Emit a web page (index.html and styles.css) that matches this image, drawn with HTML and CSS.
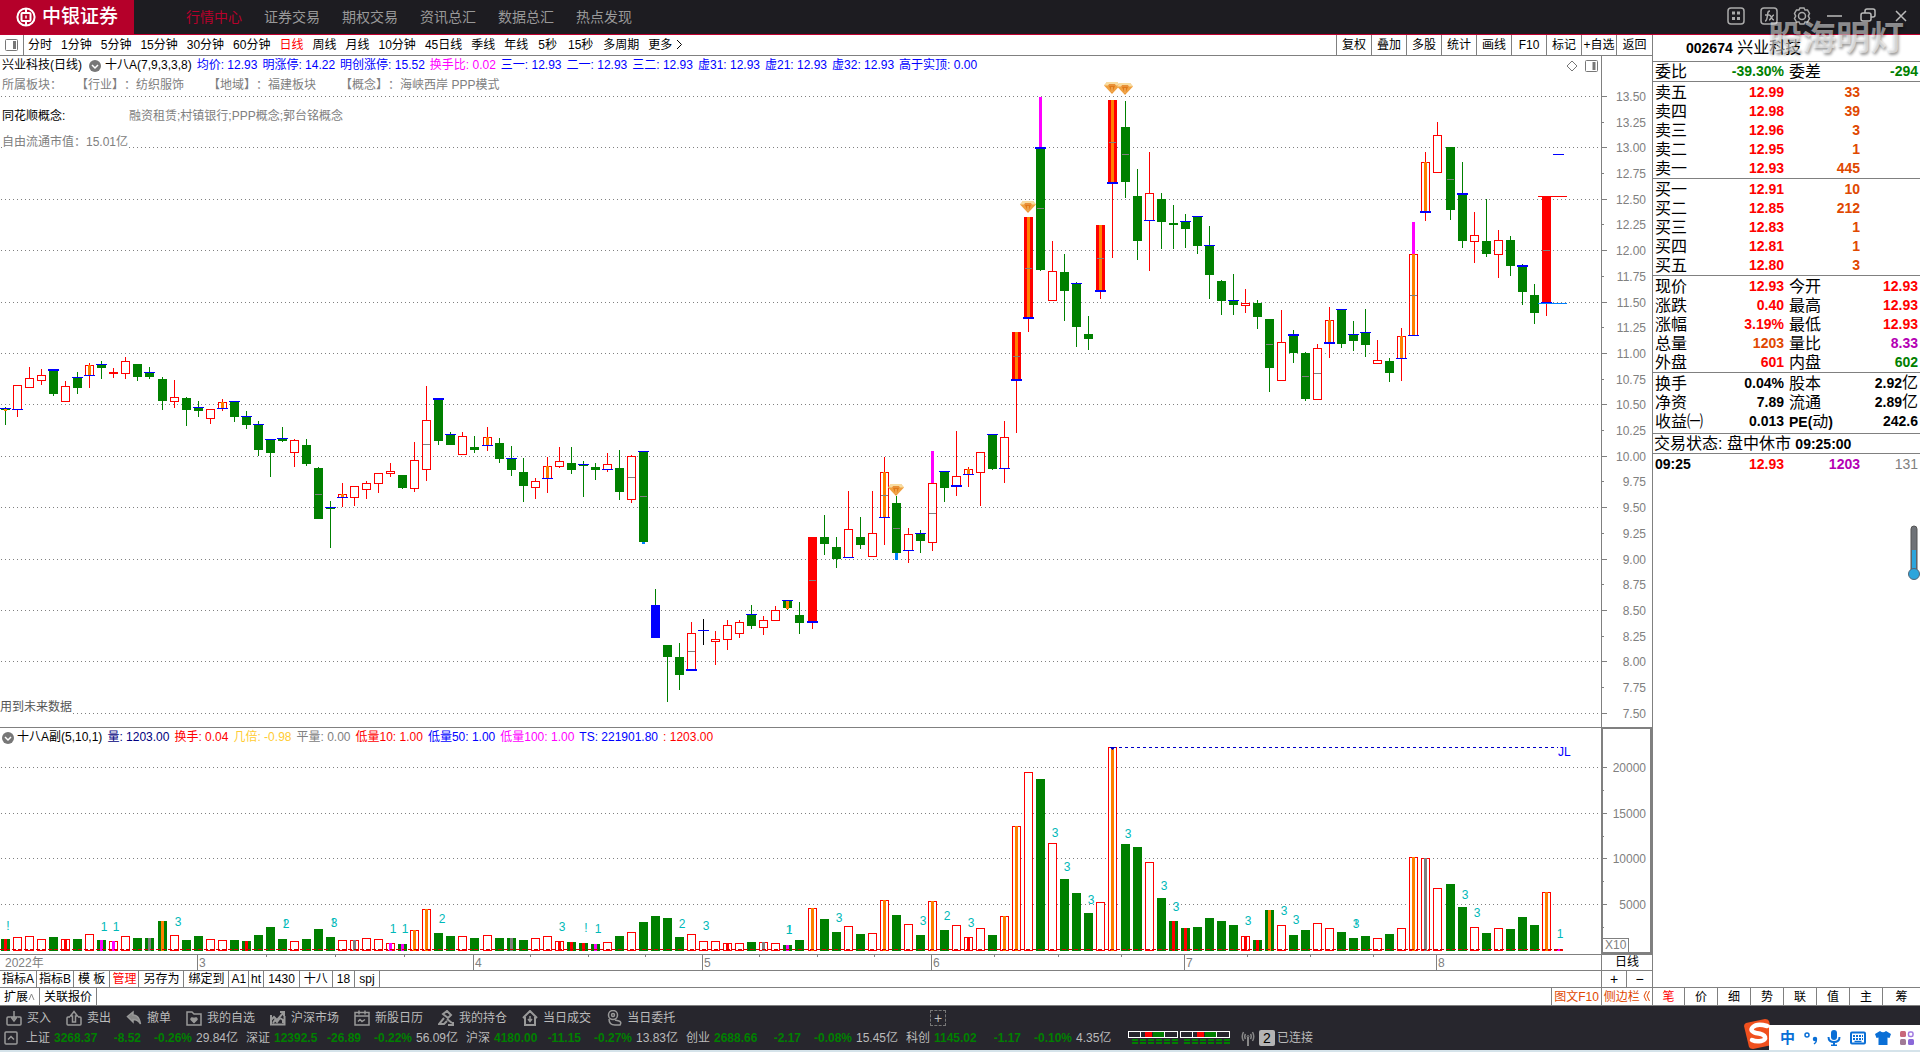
FILE: index.html
```html
<!DOCTYPE html>
<html lang="zh-CN">

<head>
    <meta charset="UTF-8">
    <meta name="viewport" content="width=device-width, initial-scale=1.0">
    <title>兴业科技 002674</title>
    <link rel="stylesheet" href="styles.css">
</head>

<body>
    <header class="titlebar">
        <div class="brand">
            <svg width="20" height="20" viewBox="0 0 20 20" fill="none" stroke="#fff">
                <circle cx="10" cy="10" r="8.6" stroke-width="2"/>
                <path d="M10 1v4.500M10 14.500V19" stroke-width="2"/>
                <rect x="5.500" y="6" width="9" height="8" rx="1" stroke-width="2"/>
                <path d="M10 8.500v3" stroke-width="1.500"/>
            </svg>
            <span>中银证券</span>
        </div>
        <nav class="main-nav">
            <a class="active" href="#">行情中心</a>
            <a href="#">证券交易</a>
            <a href="#">期权交易</a>
            <a href="#">资讯总汇</a>
            <a href="#">数据总汇</a>
            <a href="#">热点发现</a>
        </nav>
        <div class="window-tools">
            <button aria-label="应用"><svg width="18" height="18" viewBox="0 0 18 18" fill="none" stroke="#aaa" stroke-width="1.500"><rect x="1" y="1" width="16" height="16" rx="3"/><path d="M5 6h3M10 6h3M5 11.500h3M10 11.500h3" stroke-width="3"/></svg></button>
            <button aria-label="公式"><svg width="18" height="18" viewBox="0 0 18 18" fill="none" stroke="#aaa" stroke-width="1.500"><rect x="1" y="1" width="16" height="16" rx="3"/><path d="M10 4c-2 0-2 1-2.500 4s-.500 6-2.500 6M5 8h4M9 8c3 0 2 5 5 5M14 8c-2 0-3 5-5 5"/></svg></button>
            <button aria-label="设置"><svg width="18" height="18" viewBox="0 0 18 18" fill="none" stroke="#aaa" stroke-width="1.500"><circle cx="9" cy="9" r="3.500"/><path d="M7 1h4l1 2 2.500 0 2 3.500-1.200 2.500 1.200 2.500-2 3.500-2.500 0-1 2H7l-1-2-2.500 0-2-3.500L2.700 9 1.500 6.500l2-3.500L6 3z"/></svg></button>
            <button aria-label="最小化"><svg width="18" height="18" viewBox="0 0 18 18" fill="none" stroke="#bbb" stroke-width="1.500"><path d="M1 9h15"/></svg></button>
            <button aria-label="还原"><svg width="18" height="18" viewBox="0 0 18 18" fill="none" stroke="#bbb" stroke-width="1.500"><rect x="2" y="6" width="10" height="8" rx="2"/><path d="M6 6V4q0-2 2-2h6q2 0 2 2v4q0 2-2 2h-2"/></svg></button>
            <button aria-label="关闭"><svg width="18" height="18" viewBox="0 0 18 18" fill="none" stroke="#bbb" stroke-width="1.500"><path d="M4 4l10 10M14 4L4 14"/></svg></button>
        </div>
        <div class="watermark">股海明灯</div>
    </header>

    <main class="workspace">
        <section class="chart-area">
            <div class="toolbar">
                <button class="panel-toggle" aria-label="面板"><svg width="13" height="12" viewBox="0 0 13 12" fill="none" stroke="#777"><rect x=".500" y=".500" width="12" height="11" rx="1"/><path d="M9.500 2v8" stroke-width="3"/></svg></button>
                <div class="periods">
                    <button>分时</button>
                    <button>1分钟</button>
                    <button>5分钟</button>
                    <button>15分钟</button>
                    <button>30分钟</button>
                    <button>60分钟</button>
                    <button class="red">日线</button>
                    <button>周线</button>
                    <button>月线</button>
                    <button>10分钟</button>
                    <button>45日线</button>
                    <button>季线</button>
                    <button>年线</button>
                    <button class="sec">5秒</button>
                    <button class="sec">15秒</button>
                    <button>多周期</button>
                    <button>更多 <svg width="7" height="11" viewBox="0 0 7 11" fill="none" stroke="#000"><path d="M1 1l4.500 4.500L1 10"/></svg></button>
                </div>
                <div class="actions">
                    <button>复权</button>
                    <button>叠加</button>
                    <button>多股</button>
                    <button>统计</button>
                    <button>画线</button>
                    <button>F10</button>
                    <button>标记</button>
                    <button>+自选</button>
                    <button>返回</button>
                </div>
            </div>

            <div class="pane price-pane">
                <div class="plot">
                    <svg id="price-plot" viewBox="0 56 1601 671" preserveAspectRatio="none"></svg>
                    <div class="legend">
                        <div class="legend-row">
                            <span>兴业科技(日线)</span>
                            <svg class="round" width="12" height="12" viewBox="0 0 12 12"><circle cx="6" cy="6" r="6" fill="#777"/><path d="M3 5l3 3 3-3" fill="none" stroke="#fff" stroke-width="1.500"/></svg>
                            <span>十八A(7,9,3,3,8)</span>
                            <span class="blue">均价: 12.93</span>
                            <span class="blue">明涨停: 14.22</span>
                            <span class="blue">明创涨停: 15.52</span>
                            <span class="magenta">换手比: 0.02</span>
                            <span class="blue">三一: 12.93</span>
                            <span class="blue">二一: 12.93</span>
                            <span class="blue">三二: 12.93</span>
                            <span class="blue">虚31: 12.93</span>
                            <span class="blue">虚21: 12.93</span>
                            <span class="blue">虚32: 12.93</span>
                            <span class="blue">高于实顶: 0.00</span>
                        </div>
                        <div class="legend-row sector gray">
                            <span class="sector-title">所属板块：</span>
                            <span>【行业】：纺织服饰</span>
                            <span>【地域】：福建板块</span>
                            <span>【概念】：海峡西岸 PPP模式</span>
                        </div>
                        <div class="legend-row concept">
                            <span class="concept-title">同花顺概念:</span>
                            <span class="gray">融资租赁;村镇银行;PPP概念;郭台铭概念</span>
                        </div>
                        <div class="legend-row float-cap gray">自由流通市值：15.01亿</div>
                    </div>
                    <div class="plot-tools">
                        <svg width="12" height="12" viewBox="0 0 12 12" fill="none" stroke="#777"><path d="M6 1l5 5-5 5-5-5z"/></svg>
                        <svg width="13" height="12" viewBox="0 0 13 12" fill="none" stroke="#777"><rect x=".500" y=".500" width="12" height="11" rx="1"/><path d="M9 2v8" stroke-width="3"/></svg>
                    </div>
                    <div class="future-note">用到未来数据</div>
                </div>
                <div class="scale">
                    <svg id="price-scale" viewBox="1601 56 51 671" preserveAspectRatio="none"></svg>
                </div>
            </div>

            <div class="pane volume-pane">
                <div class="plot">
                    <svg id="volume-plot" viewBox="0 728 1601 226" preserveAspectRatio="none"></svg>
                    <div class="legend">
                        <div class="legend-row">
                            <svg class="round" width="12" height="12" viewBox="0 0 12 12"><circle cx="6" cy="6" r="6" fill="#777"/><path d="M3 5l3 3 3-3" fill="none" stroke="#fff" stroke-width="1.500"/></svg>
                            <span>十八A副(5,10,1)</span>
                            <span class="navy">量: 1203.00</span>
                            <span class="red">换手: 0.04</span>
                            <span class="yellow">几倍: -0.98</span>
                            <span class="gray">平量: 0.00</span>
                            <span class="red">低量10: 1.00</span>
                            <span class="blue">低量50: 1.00</span>
                            <span class="magenta">低量100: 1.00</span>
                            <span class="blue">TS: 221901.80</span>
                            <span class="red">: 1203.00</span>
                        </div>
                    </div>
                </div>
                <div class="scale boxed">
                    <svg id="volume-scale" viewBox="1603 729 47 223" preserveAspectRatio="none"></svg>
                    <span class="multiplier">X10</span>
                </div>
            </div>

            <div class="strip time-strip">
                <svg id="time-axis" viewBox="0 955 1601 15" preserveAspectRatio="none"></svg>
                <div class="cell-period">日线</div>
            </div>
            <div class="strip template-strip">
                <button class="tight">指标A</button>
                <button class="tight">指标B</button>
                <button>模 板</button>
                <button class="tight red">管理</button>
                <button>另存为</button>
                <button>绑定到</button>
                <button class="tight">A1</button>
                <button class="tight">ht</button>
                <button>1430</button>
                <button>十八</button>
                <button>18</button>
                <button>spj</button>
                <div class="zoom-buttons">
                    <button>+</button>
                    <button>−</button>
                </div>
            </div>
            <div class="strip extend-strip">
                <button>扩展<svg width="7" height="8" viewBox="0 0 7 8" fill="none" stroke="#888"><path d="M1 7l2.500-6L6 7"/></svg></button>
                <button>关联报价</button>
                <div class="side-links">
                    <button>图文F10</button>
                    <button>侧边栏 <svg width="7" height="10" viewBox="0 0 7 10" fill="none" stroke="#e04800"><path d="M3.500 0L1 5l2.500 5M6.500 0L4 5l2.500 5"/></svg></button>
                </div>
            </div>
        </section>

        <aside class="quote">
            <h1 class="quote-title"><b>002674</b> 兴业科技</h1>
            <table class="pairs">
                <tr><th>委比</th><td class="green">-39.30%</td><th>委差</th><td class="green">-294</td></tr>
            </table>
            <table class="book">
                <tr><th>卖五</th><td>12.99</td><td>33</td><td></td></tr>
                <tr><th>卖四</th><td>12.98</td><td>39</td><td></td></tr>
                <tr><th>卖三</th><td>12.96</td><td>3</td><td></td></tr>
                <tr><th>卖二</th><td>12.95</td><td>1</td><td></td></tr>
                <tr><th>卖一</th><td>12.93</td><td>445</td><td></td></tr>
            </table>
            <table class="book">
                <tr><th>买一</th><td>12.91</td><td>10</td><td></td></tr>
                <tr><th>买二</th><td>12.85</td><td>212</td><td></td></tr>
                <tr><th>买三</th><td>12.83</td><td>1</td><td></td></tr>
                <tr><th>买四</th><td>12.81</td><td>1</td><td></td></tr>
                <tr><th>买五</th><td>12.80</td><td>3</td><td></td></tr>
            </table>
            <table class="pairs">
                <tr><th>现价</th><td class="red">12.93</td><th>今开</th><td class="red">12.93</td></tr>
                <tr><th>涨跌</th><td class="red">0.40</td><th>最高</th><td class="red">12.93</td></tr>
                <tr><th>涨幅</th><td class="red">3.19%</td><th>最低</th><td class="red">12.93</td></tr>
                <tr><th>总量</th><td class="orange">1203</td><th>量比</th><td class="purple">8.33</td></tr>
                <tr><th>外盘</th><td class="red">601</td><th>内盘</th><td class="green">602</td></tr>
            </table>
            <table class="pairs basics">
                <tr><th>换手</th><td>0.04%</td><th>股本</th><td>2.92<i>亿</i></td></tr>
                <tr><th>净资</th><td>7.89</td><th>流通</th><td>2.89<i>亿</i></td></tr>
                <tr><th>收益㈠</th><td>0.013</td><th><b>PE(</b>动<b>)</b></th><td>242.6</td></tr>
            </table>
            <p class="status">交易状态: 盘中休市 <b>09:25:00</b></p>
            <table class="book ticks">
                <tr><td class="time">09:25</td><td>12.93</td><td class="purple">1203</td><td class="count">131</td></tr>
            </table>
            <div class="thermo">
                <svg width="12" height="56" viewBox="0 0 12 56"><rect x="3" y="1" width="6" height="46" rx="3" fill="#6f7378" stroke="#555"/><rect x="4" y="25" width="4" height="24" fill="#2da5dc"/><circle cx="6" cy="49" r="5.500" fill="#2da5dc" stroke="#567"/></svg>
            </div>
            <div class="quote-tabs">
                <button class="red">笔</button>
                <button>价</button>
                <button>细</button>
                <button>势</button>
                <button>联</button>
                <button>值</button>
                <button>主</button>
                <button>筹</button>
            </div>
        </aside>
    </main>

    <footer class="dock">
        <div class="shortcuts">
            <a href="#"><svg viewBox="0 0 16 16"><path d="M4 7H2q-1 0-1 1v6q0 1 1 1h12q1 0 1-1V8q0-1-1-1h-2M8 1v8M5 7l3 4 3-4z"/></svg>买入</a>
            <a href="#"><svg viewBox="0 0 16 16"><path d="M4 7H2q-1 0-1 1v6q0 1 1 1h12q1 0 1-1V8q0-1-1-1h-2M6.500 12V6H4.500L8 1.500 11.500 6h-2v6z"/></svg>卖出</a>
            <a href="#"><svg viewBox="0 0 16 16"><path d="M1.500 6.500L7 2v3q6 0 7.500 9Q12 9.500 7 9.500V12z" fill="#888"/></svg>撤单</a>
            <a href="#"><svg viewBox="0 0 16 16"><path d="M1 2h5l2 2h7v11H1z"/><path d="M8 12.500l-3-3q0-2.500 3-1 3-1.500 3 1z" fill="#999"/></svg>我的自选</a>
            <a href="#"><svg viewBox="0 0 16 16"><path d="M1 5v9.500h13.500V6M1 10l3-3 3 3 7-8M10 2h4v4M3 13l2-3 2 2 3-4 3 2v3" stroke-width="2"/></svg>沪深市场</a>
            <a href="#"><svg viewBox="0 0 16 16"><path d="M1 2.500h14V15H1zM1 6h14M5 .500v4M11 .500v4M4 11.500l2-2 2 2 3-2"/></svg>新股日历</a>
            <a href="#"><svg viewBox="0 0 16 16"><path d="M5 4l4-3 4 4-3 3zM6 8L1 14h5l3-3M9 9l5 4M10 15h5v-3" stroke-width="2"/></svg>我的持仓</a>
            <a href="#"><svg viewBox="0 0 16 16"><path d="M1 8l7-7 7 7M3 7v8h10V7" stroke-width="2"/><path d="M8 6v5M6 9l2 2.500L10 9"/></svg>当日成交</a>
            <a href="#"><svg viewBox="0 0 16 16"><circle cx="7" cy="5" r="4.500"/><circle cx="7" cy="5" r="1.500"/><path d="M3 9q0 6 6 6h5q2-3-1-4l-4-1"/></svg>当日委托</a>
            <button class="add" aria-label="添加">+</button>
        </div>
        <div class="indices">
            <svg class="fold" viewBox="0 0 14 14" fill="none" stroke="#999" stroke-width="1.500"><rect x="1" y="1" width="12" height="12" rx="1"/><path d="M4 8.500L7 5.500l3 3"/></svg>
            <div class="index"><span>上证</span><b>3268.37</b><b class="num">-8.52</b><b class="num">-0.26%</b><span class="amt">29.84亿</span></div>
            <div class="index"><span>深证</span><b>12392.5</b><b class="num">-26.89</b><b class="num">-0.22%</b><span class="amt">56.09亿</span></div>
            <div class="index"><span>沪深</span><b>4180.00</b><b class="num">-11.15</b><b class="num">-0.27%</b><span class="amt">13.83亿</span></div>
            <div class="index"><span>创业</span><b>2688.66</b><b class="num">-2.17</b><b class="num">-0.08%</b><span class="amt">15.45亿</span></div>
            <div class="index"><span>科创</span><b>1145.02</b><b class="num">-1.17</b><b class="num">-0.10%</b><span class="amt">4.35亿</span></div>
            <svg class="meter" width="102" height="14" viewBox="0 0 102 14" shape-rendering="crispEdges">
                <defs>
                    <g id="gauge">
                        <path d="M.500 .500h49v6H.500zM12.500 0v7M36.500 0v7" fill="none" stroke="#fff"/>
                        <rect x="17" y="1" width="7" height="5" fill="#f00"/>
                        <rect x="25" y="1" width="11" height="5" fill="#008000"/>
                        <path d="M4 9h46M4 12h46" stroke="#008000" stroke-width="2" stroke-dasharray="6 2"/>
                    </g>
                </defs>
                <use href="#gauge"/>
                <use href="#gauge" x="52"/>
            </svg>
            <svg class="antenna" width="14" height="15" viewBox="0 0 14 15" fill="none" stroke="#888"><path d="M7 6v9" stroke-width="2"/><circle cx="7" cy="5.500" r="1"/><path d="M4.500 3q-1.500 2.500 0 5M9.500 3q1.500 2.500 0 5M2.500 1Q0 5.500 2.500 10M11.500 1Q14 5.500 11.500 10" stroke-width="1.500"/></svg>
            <span class="badge">2</span>
            <span>已连接</span>
        </div>
        <div class="ime">
            <svg width="32" height="32" viewBox="0 0 32 32"><path d="M1 8q0-2 2-3L22 1q3 0 4 2l5 20q0 3-2 4l-19 4q-3 0-4-2z" fill="#f0501e"/><path d="M24 8Q14 5 10 9t3 6q8 1 9 4t-4 4q-5 1-9-1" fill="none" stroke="#fff" stroke-width="4.500" stroke-linecap="round"/></svg>
            <div class="ime-bar">
                <span class="ime-mode">中</span>
                <svg width="14" height="16" viewBox="0 0 14 16" fill="none" stroke="#0a6fd6" stroke-width="1.500"><circle cx="3" cy="5" r="2"/><circle cx="11" cy="9" r="1.500" fill="#0a6fd6"/><path d="M12 9q1 3-2 5"/></svg>
                <svg width="14" height="16" viewBox="0 0 14 16" fill="none" stroke="#0a6fd6" stroke-width="2"><rect x="4" y="0" width="6" height="10" rx="3" fill="#0a6fd6" stroke="none"/><path d="M1.500 7q0 5 5.500 5t5.500-5M7 12v3M4 15.500h6"/></svg>
                <svg width="16" height="14" viewBox="0 0 16 14" fill="none" stroke="#0a6fd6" stroke-width="2"><rect x="1" y="1.500" width="14" height="11" rx="1"/><path d="M3 5h10M3 8h10" stroke-dasharray="2 1"/><path d="M4.500 10.500h7" stroke-width="1.500"/></svg>
                <svg width="16" height="14" viewBox="0 0 16 14" fill="#0a6fd6"><path d="M5 0q3 2.500 6 0l5 3-1.500 4-2-.500V14h-9V6.500L1.500 7 0 3z"/></svg>
                <svg width="14" height="14" viewBox="0 0 14 14"><rect width="6" height="6" rx="1.500" fill="#c8687a"/><rect x="8.500" y="1" width="4.500" height="4.500" rx="1.500" fill="none" stroke="#a078e0" stroke-width="1.500"/><rect y="8" width="6" height="6" rx="1.500" fill="#a07a96"/><rect x="8" y="8" width="6" height="6" rx="1.500" fill="#8a68d8"/></svg>
            </div>
        </div>
    </footer>

    <script src="chart.js"></script>
</body>

</html>
```
FILE: styles.css
```css
* {
    box-sizing: border-box;
}

body {
    margin: 0;
    height: 100vh;
    display: flex;
    flex-direction: column;
    background: #d5e3ea;
    color: #000;
    font: 12px/16px "Liberation Sans", "Noto Sans CJK SC", sans-serif;
    text-spacing-trim: space-all;
    padding-bottom: 2px;
    overflow: hidden;
}

button {
    border: 0;
    padding: 0;
    background: none;
    color: inherit;
    font: inherit;
    white-space: nowrap;
    cursor: pointer;
}

a {
    color: inherit;
    text-decoration: none;
}

svg {
    display: block;
    flex: none;
}

.red { color: #f00; }
.blue { color: #00f; }
.navy { color: #000080; }
.magenta { color: #f0f; }
.yellow { color: #fc3; }
.gray { color: #808080; }

/* title bar */
.titlebar {
    position: relative;
    flex: none;
    display: flex;
    height: 35px;
    background: #1d1c21;
    border-bottom: 1px solid #c00030;
}

.brand {
    display: flex;
    align-items: center;
    gap: 6px;
    width: 134px;
    padding-left: 16px;
    background: #b5002a;
    color: #fff;
    font-size: 19px;
    font-weight: 500;
}

.main-nav {
    display: flex;
    align-items: center;
    gap: 22px;
    padding-left: 52px;
    color: #999;
    font-size: 14px;
}

.main-nav .active {
    color: #b8002c;
}

.window-tools {
    display: flex;
    align-items: center;
    gap: 15px;
    margin-left: auto;
    padding: 0 10px 2px 0;
}

.watermark {
    position: absolute;
    top: 18px;
    right: 16px;
    z-index: 5;
    color: rgba(255, 255, 255, 0.5);
    font-size: 34px;
    font-weight: bold;
    line-height: 40px;
    text-shadow: 1px 2px 3px rgba(0, 0, 0, 0.4);
    pointer-events: none;
}

/* workspace */
.workspace {
    flex: 1;
    min-height: 0;
    display: flex;
    background: #fff;
}

.chart-area {
    flex: 1;
    min-width: 0;
    display: flex;
    flex-direction: column;
}

.toolbar {
    flex: none;
    display: flex;
    height: 21px;
    border-bottom: 1px solid #808080;
}

.panel-toggle {
    width: 24px;
    padding-left: 5px;
    border-right: 1px solid #808080;
}

.periods {
    display: flex;
    gap: 9px;
    padding-left: 4px;
}

.periods .sec {
    padding: 0 1px;
}

.periods svg {
    display: inline-block;
    vertical-align: -1px;
}

.actions {
    display: flex;
    margin-left: auto;
}

.actions button {
    width: 35px;
    border-left: 1px solid #808080;
}

.actions button:last-child {
    width: 36px;
}

.pane {
    display: flex;
    min-height: 0;
}

.price-pane {
    flex: 671 1 0;
}

.volume-pane {
    flex: 226 1 0;
    border-top: 1px solid #808080;
}

.plot {
    position: relative;
    flex: 1;
    min-width: 0;
}

.plot > svg,
.scale > svg {
    width: 100%;
    height: 100%;
}

.scale {
    position: relative;
    flex: none;
    width: 51px;
}

.scale.boxed {
    border: 2px solid #808080;
    border-top-width: 1px;
}

.multiplier {
    position: absolute;
    left: 0;
    bottom: 0;
    padding: 0 2px;
    border: 1px solid #808080;
    border-width: 1px 1px 0 0;
    color: #808080;
    line-height: 13px;
}

.legend {
    position: absolute;
    top: 0;
    left: 0;
    padding-left: 2px;
    line-height: 19px;
    white-space: nowrap;
}

.legend-row {
    display: flex;
    align-items: center;
    gap: 5px;
}

.round {
    margin-right: -2px;
}

.price-pane .round {
    margin: 0 -1px 0 2px;
}

.sector {
    gap: 24px;
    margin-top: 1px;
}

.sector-title {
    margin-right: -10px;
}

.concept {
    margin-top: 12px;
}

.concept-title {
    width: 122px;
}

.float-cap {
    width: fit-content;
    margin-top: 7px;
    background: #fff;
}

.plot-tools {
    position: absolute;
    top: 4px;
    right: 3px;
    display: flex;
    gap: 7px;
}

.future-note {
    position: absolute;
    left: 0;
    bottom: 12px;
    background: #fff;
    color: #555;
}

.strip {
    flex: none;
    display: flex;
    border-top: 1px solid #808080;
}

.time-strip {
    height: 16px;
}

.time-strip svg {
    flex: 1;
    min-width: 0;
    height: 15px;
}

.cell-period {
    width: 51px;
    border-left: 1px solid #808080;
    text-align: center;
    line-height: 15px;
}

.template-strip {
    height: 17px;
}

.extend-strip {
    height: 18px;
}

.template-strip button,
.extend-strip button {
    padding: 0 4px;
    border-right: 1px solid #808080;
}

.template-strip .tight {
    padding: 0 2px;
}

.extend-strip svg {
    display: inline-block;
}

.zoom-buttons,
.side-links {
    display: flex;
    margin-left: auto;
    border-left: 1px solid #808080;
}

.zoom-buttons button {
    width: 25px;
    padding: 0;
    font-size: 14px;
}

.zoom-buttons button:last-child,
.side-links button:last-child {
    border: 0;
}

.side-links button {
    width: 50px;
    padding: 0;
    color: #e04800;
}

/* quote panel */
.quote {
    position: relative;
    flex: none;
    width: 268px;
    display: flex;
    flex-direction: column;
    border-left: 1px solid #808080;
    font-size: 16px;
}

.quote-title {
    margin: 0;
    padding-left: 33px;
    font-size: 16px;
    font-weight: normal;
    line-height: 26px;
}

.quote b {
    font-size: 14px;
    line-height: 1;
}

.quote table {
    width: 100%;
    table-layout: fixed;
    border-collapse: separate;
    border-spacing: 0;
    border-top: 1px solid #808080;
    padding: 0 2px;
}

.quote .book,
.quote .pairs + .pairs,
.quote .book + .pairs {
    padding-top: 1px;
}

.quote .basics {
    padding-bottom: 2px;
}

.quote tr {
    height: 19px;
}

.quote th {
    width: 50px;
    padding: 0;
    font-weight: normal;
    line-height: 19px;
    text-align: left;
    white-space: nowrap;
}

.quote td {
    padding: 0;
    font-size: 14px;
    font-weight: bold;
    line-height: 19px;
    text-align: right;
}

.quote td:nth-child(2) {
    width: 79px;
}

.quote th + td + th {
    width: 55px;
    padding-left: 5px;
}

.quote td i {
    font-size: 16px;
    font-style: normal;
    font-weight: normal;
    line-height: 1;
}

.book td {
    color: #f00;
}

.book td:nth-child(3) {
    width: 76px;
    color: #e04800;
}

.quote .orange { color: #e04800; }
.quote .green { color: #008000; }
.quote .book .purple,
.quote .purple { color: #b400b4; }

.quote .ticks .time {
    width: 50px;
    color: #000;
    text-align: left;
}

.quote .ticks .count {
    color: #808080;
    font-weight: normal;
}

.status {
    height: 20px;
    margin: 0;
    padding-left: 1px;
    border-top: 1px solid #808080;
    line-height: 19px;
}

.thermo {
    position: absolute;
    top: 490px;
    right: 0;
}

.quote-tabs {
    display: flex;
    height: 18px;
    margin-top: auto;
    border-top: 1px solid #808080;
    font-size: 12px;
}

.quote-tabs button {
    width: 33px;
    border-left: 1px solid #808080;
}

.quote-tabs button:first-child {
    width: 31px;
    border: 0;
}

.quote-tabs button:last-child {
    flex: 1;
}

/* bottom dock */
.dock {
    position: relative;
    flex: none;
    height: 45px;
    border-top: 1px solid #808080;
    background: #27262d;
    color: #bbb;
}

.shortcuts {
    display: flex;
    align-items: center;
    gap: 15px;
    height: 24px;
    padding-left: 6px;
}

.shortcuts a {
    display: flex;
    align-items: center;
    gap: 5px;
}

.shortcuts svg {
    width: 16px;
    height: 16px;
    fill: none;
    stroke: #999;
    stroke-width: 1.5;
}

.add {
    width: 16px;
    height: 16px;
    margin-left: 240px;
    border: 1px dashed #777;
    font-size: 14px;
    line-height: 14px;
}

.indices {
    display: flex;
    align-items: center;
    height: 16px;
    padding-left: 4px;
}

.fold {
    width: 14px;
    height: 14px;
    margin-right: 8px;
}

.index {
    display: grid;
    grid-template-columns: 28px 45px 42px 51px 42px;
    width: 220px;
}

.index b {
    color: #008000;
}

.index .num {
    text-align: right;
}

.index .amt {
    padding-left: 4px;
    white-space: nowrap;
}

.meter {
    margin: 0 11px 0 2px;
}

.badge {
    width: 16px;
    height: 16px;
    margin: 0 2px 0 4px;
    border-radius: 2px;
    background: #b4b4b4;
    color: #000;
    font-size: 14px;
    text-align: center;
}

.ime {
    position: absolute;
    right: 0;
    bottom: 0;
    display: flex;
    align-items: flex-end;
}

.ime-bar {
    display: flex;
    align-items: center;
    gap: 9px;
    height: 25px;
    margin-left: -6px;
    padding: 0 6px 0 11px;
    background: #fff;
}

.ime-mode {
    color: #0a6fd6;
    font-size: 15px;
    font-weight: bold;
}
```
FILE: chart.js
```js
// type, high, body top, body bottom, low, marks, mid line
// t/T thin/thick line on top, b/B on the bottom, o orange core, p spike, c tail
const candles = [
    ['g', 407, 408, 410, 425, 'to'], ['r', 385, 385, 410, 417, 'b'], ['r', 367, 378, 388, 388], ['r', 369, 375, 381, 385],
    ['g', 369, 369, 394, 396, 'T'], ['r', 381, 386, 402, 402], ['g', 372, 377, 388, 394, 't'], ['r', 363, 365, 376, 388, 'bo'],
    ['g', 361, 364, 368, 379, 't'], ['r', 368, 372, 374, 378], ['r', 357, 361, 374, 379], ['g', 364, 364, 377, 381],
    ['g', 367, 372, 377, 379, 't'], ['g', 377, 379, 401, 410], ['r', 380, 397, 402, 408], ['g', 397, 398, 410, 426],
    ['g', 401, 407, 411, 417, 't'], ['r', 409, 409, 419, 424], ['r', 399, 402, 409, 411, 'bo'], ['g', 401, 401, 417, 422, 't'],
    ['g', 411, 416, 425, 429, 't'], ['g', 421, 424, 450, 456, 't'], ['g', 439, 439, 453, 477, 't'], ['g', 427, 438, 441, 442, 't'],
    ['r', 439, 440, 453, 467], ['g', 439, 445, 464, 466], ['g', 467, 468, 519, 519, '', 494], ['g', 501, 507, 509, 548, 't'],
    ['r', 483, 494, 498, 507, 'bo'], ['r', 486, 486, 498, 506], ['r', 481, 483, 490, 499], ['r', 473, 473, 484, 493],
    ['r', 463, 471, 474, 477], ['g', 475, 475, 488, 489], ['r', 442, 460, 489, 492], ['r', 386, 420, 470, 481, '', 444],
    ['g', 398, 398, 441, 445, 'T'], ['g', 432, 434, 445, 445, 't'], ['r', 432, 436, 455, 455], ['g', 436, 447, 450, 453],
    ['r', 427, 437, 446, 451, 'bo'], ['g', 438, 443, 459, 463], ['g', 446, 458, 470, 476, 't'], ['g', 458, 472, 486, 502],
    ['r', 478, 481, 488, 499], ['r', 457, 466, 479, 493, 'bo'], ['r', 447, 461, 467, 468], ['g', 447, 463, 470, 474],
    ['g', 461, 464, 466, 497, 't'], ['g', 463, 467, 470, 480], ['r', 453, 464, 470, 472, 'b'], ['g', 450, 468, 492, 500],
    ['r', 455, 456, 500, 503, '', 477], ['g', 451, 451, 542, 544, 'tc', 496], ['b', 589, 605, 638, 638], ['g', 645, 645, 657, 702],
    ['g', 643, 657, 675, 690], ['r', 622, 633, 670, 670, 'B', 651], ['k', 619, 630, 631, 645, 't'], ['r', 631, 639, 642, 665],
    ['r', 620, 625, 640, 650], ['r', 620, 622, 634, 638], ['g', 605, 614, 626, 629, 't'], ['r', 616, 620, 628, 635],
    ['r', 606, 610, 621, 621], ['g', 600, 600, 608, 610, 'to'], ['g', 602, 615, 623, 634], ['R', 537, 537, 622, 629, 'B', 580],
    ['g', 515, 537, 544, 555], ['g', 537, 547, 559, 568], ['r', 491, 529, 558, 558, 'b'], ['g', 517, 537, 545, 549],
    ['r', 491, 533, 557, 557], ['r', 457, 472, 518, 545, 'bo', 495], ['g', 496, 503, 553, 560, 'c', 528], ['r', 528, 534, 551, 563, 'b'],
    ['g', 530, 533, 541, 553, 't'], ['r', 451, 483, 543, 551, 'p', 513], ['g', 471, 471, 488, 502, 't'], ['r', 431, 476, 486, 496, 'B'],
    ['r', 467, 469, 475, 487, 'bo'], ['r', 452, 452, 473, 506], ['g', 434, 434, 469, 470, 't'], ['r', 421, 437, 469, 483, 'b'],
    ['R', 332, 332, 380, 433, 'Bo', 356], ['R', 217, 217, 318, 332, 'Bo', 268], ['g', 97, 147, 270, 271, 'Tp', 208], ['r', 241, 271, 301, 301],
    ['g', 254, 272, 291, 321], ['g', 282, 283, 327, 347, 't'], ['g', 316, 334, 339, 350], ['R', 225, 225, 291, 299, 'Bo', 258],
    ['R', 100, 100, 183, 258, 'Bo', 142], ['g', 101, 127, 182, 198, '', 154], ['g', 169, 196, 241, 260], ['r', 152, 193, 221, 271, 'b'],
    ['g', 193, 199, 222, 249], ['g', 205, 223, 225, 249], ['g', 214, 221, 229, 248, 't'], ['g', 216, 216, 246, 254, 't'],
    ['g', 226, 245, 275, 299, 't'], ['g', 280, 281, 301, 315], ['g', 274, 300, 305, 315, 't'], ['r', 289, 303, 306, 313],
    ['g', 300, 303, 317, 329], ['g', 319, 319, 368, 392, '', 344], ['r', 310, 342, 381, 381], ['g', 330, 334, 353, 363, 'T'],
    ['g', 352, 353, 399, 401, '', 376], ['r', 344, 348, 400, 400, '', 373], ['r', 307, 320, 343, 358, 'Bo'], ['g', 309, 309, 344, 348, 't'],
    ['g', 321, 334, 341, 351, 't'], ['g', 309, 332, 345, 357, 't'], ['r', 340, 360, 364, 364], ['g', 358, 361, 373, 382],
    ['r', 328, 336, 359, 381, 'bo'], ['r', 222, 254, 336, 336, 'bop', 295], ['r', 152, 162, 212, 221, 'Bo'], ['r', 122, 135, 173, 173],
    ['g', 147, 147, 210, 220, '', 179], ['g', 162, 193, 241, 248, 'T'], ['r', 212, 235, 242, 263], ['g', 199, 241, 254, 257],
    ['r', 230, 240, 255, 278], ['g', 236, 240, 266, 276], ['g', 264, 265, 292, 305, 'T'], ['g', 284, 295, 313, 324],
    ['R', 196, 196, 303, 316, 'b', 250]
];

// color, bar top, core stripe
const volumes = `g939r r937 r936 r939 g937 r939r g939 r934 g940m r941m r936 g938 g938y g921o r935 g940 g936 r939 r940 g940
g941r g935 g927 g939 r941 g939 g929 g937 r940 r940y r938 r939 r943m g944m r930o r909o g933 g936 r936 g938
r935 g938 g938y g940 r938 r936 r941r g942r g943r g944m r942 g936 r932 g922 g916 g918 g937 r934 r941 r941
r943r r943 g942 r942y r943 g945m g940 r908o g919 g932 r926 g934 r933 r900o g915 r924 g935 r901o g930 r925
r937r r928 g935 r916o r826o r772 g779 r843 g879 g893 g913 r902 r747o g844 g847 r862 g898 g921r g928r g927
g918 g921 g925 r936r g940r g910o r925 g935 g930 r923 r928 g932 g938 g936 r938 g934 r928 r857o r858y r888
g884 g907 r927 g933 r928 g929 g917 g925 r892o r949m`.split(/\s+/);

const volumeMarks = [
    ['!', 8, 926], ['1', 104, 927], ['1', 116, 927], ['3', 178, 922], ['2', 286, 924], ['!', 285, 924], ['3', 334, 923], ['!', 333, 923],
    ['1', 393, 929], ['1', 405, 929], ['2', 442, 919], ['3', 562, 927], ['!', 586, 928], ['1', 598, 929], ['2', 682, 924], ['3', 706, 926],
    ['1', 789, 930], ['!', 790, 930], ['3', 839, 918], ['3', 923, 921], ['2', 947, 916], ['3', 971, 923], ['3', 1055, 833], ['3', 1067, 867],
    ['3', 1091, 900], ['3', 1128, 834], ['3', 1164, 886], ['3', 1176, 907], ['3', 1248, 921], ['3', 1284, 911], ['3', 1296, 920],
    ['3', 1356, 924], ['!', 1356, 924], ['3', 1465, 895], ['3', 1477, 913], ['1', 1560, 934]
];

const colors = {
    r: '#ff0000', R: '#ff0000', g: '#008000', b: '#0000ff', k: '#000000',
    o: '#ff8000', m: '#ff00ff', y: '#808080'
};

const centre = i => Math.floor(5.525 + 12.0374 * i);

function rect(x, y, w, h, fill) {
    return `<rect x="${x}" y="${y}" width="${w}" height="${h}" fill="${fill}"/>`;
}

function text(x, y, label, fill, anchor = 'start') {
    return `<text x="${x}" y="${y}" fill="${fill}" text-anchor="${anchor}">${label}</text>`;
}

function line(x1, y1, x2, y2, color, dash = '') {
    return `<path d="M${x1} ${y1}L${x2} ${y2}" stroke="${color}" stroke-dasharray="${dash}"/>`;
}

function hollow(x, top, bottom) {
    if (bottom - top < 3) return rect(x - 4, top, 9, bottom - top, colors.r);
    return rect(x - 4, top, 9, bottom - top, colors.r) + rect(x - 3, top + 1, 7, bottom - top - 2, '#fff');
}

function draw(id, content) {
    document.getElementById(id).innerHTML = `<g shape-rendering="crispEdges" font-size="12">${content}</g>`;
}

function diamond(x, y) {
    return `<g transform="translate(${x - 8} ${y})" shape-rendering="auto">
        <path d="M3 0h10l3 3.500L8 12 0 3.500z" fill="#f0a040"/>
        <path d="M3 0h10l3 3.500H0z" fill="#f8dca0"/>
        <path d="M5 2h6l1 2H4z" fill="#e89038"/>
        <path d="M5 4h6l-3 7z" fill="#e07818"/><path d="M8 5v5" stroke="#f8c878"/></g>`;
}

function drawPrice() {
    let out = '';
    let scale = line(1601.5, 56, 1601.5, 727, '#808080');
    for (let n = 0; n <= 24; n++) {
        const y = Math.floor(96.4 + n * 25.7);
        const major = n % 2 === 0;
        if (major) out += line(1, y + 0.5, 1601, y + 0.5, '#808080', '1 3');
        scale += line(1602, y + 0.5, major ? 1607 : 1604, y + 0.5, '#808080');
        scale += text(1646, y + 5, (13.5 - n * 0.25).toFixed(2), '#808080', 'end');
    }

    candles.forEach(([type, high, top, bottom, low, marks = '', mid], i) => {
        const x = centre(i);
        const spike = marks.includes('p');
        const tail = marks.includes('c');
        const wickTop = spike ? top : high;
        const wickEnd = tail ? bottom : low;
        out += rect(x, wickTop, 1, wickEnd - wickTop, type === 'b' ? colors.g : colors[type]);
        if (spike) out += rect(x - 1, high, 3, top - high, colors.m);
        if (tail) out += rect(x - 1, bottom, 3, low - bottom, '#0080ff');
        if (type === 'r') out += hollow(x, top, bottom);
        else if (type !== 'k') out += rect(x - 4, top, 9, bottom - top, colors[type]);
        if (marks.includes('o')) out += rect(x - 1, top, 3, bottom - top + (type === 'g' ? 1 : 0), colors.o);
        if (mid) out += rect(x - 3, mid, 7, 1, '#808080');
        if (marks.includes('t')) out += rect(x - 5, top, 11, 1, colors.b);
        if (marks.includes('T')) out += rect(x - 5, top, 11, 2, colors.b);
        if (marks.includes('b')) out += rect(x - 5, bottom - 1, 11, 1, colors.b);
        if (marks.includes('B')) out += rect(x - 5, bottom - 1, 11, 2, colors.b);
    });

    // limits of the current day
    out += rect(1538, 196, 29, 1, colors.r);
    out += rect(1538, 303, 29, 1, '#0080ff');
    out += rect(1553, 154, 11, 1, colors.b);
    out += diamond(896, 484) + diamond(1028, 201) + diamond(1112, 82) + diamond(1125, 83);

    draw('price-plot', out);
    draw('price-scale', scale);
}

function drawVolume() {
    let out = '';
    let scale = '';
    [767, 813, 858, 904].forEach((y, n) => {
        out += line(1, y + 0.5, 1601, y + 0.5, '#808080', '1 3');
        scale += line(1603, y + 0.5, 1607, y + 0.5, '#808080');
        scale += line(1603, y + 23.5, 1604, y + 23.5, '#808080');
        scale += text(1646, y + 5, 20000 - n * 5000, '#808080', 'end');
    });

    volumes.forEach((item, i) => {
        const x = centre(i);
        const top = Number(item.slice(1, 4));
        const core = item[4];
        out += item[0] === 'r' ? hollow(x, top, 951) : rect(x - 4, top, 9, 951 - top, colors.g);
        if (core) out += rect(x - 1, top, 3, 951 - top, colors[core]);
    });
    out += line(0, 949.5, 1562, 949.5, '#d00000', '4 2');

    out += line(1113, 747.5, 1558, 747.5, '#0000c8', '3 3');
    out += `<path d="M1109 747h6l-3 3z" fill="#0000c8"/>`;
    out += text(1558, 756, 'JL', '#0000ff');
    volumeMarks.forEach(([label, x, y]) => {
        out += text(x, y + 4, label, '#00b8b8', 'middle');
    });

    draw('volume-plot', out);
    draw('volume-scale', scale);
}

function drawTimeAxis() {
    let out = text(5, 967, '2022年', '#808080');
    [[197, 3], [473, 4], [702, 5], [931, 6], [1184, 7], [1436, 8]].forEach(([x, month]) => {
        out += line(x + 0.5, 955, x + 0.5, 970, '#808080');
        out += text(x + 2, 967, month, '#808080');
    });
    [266, 335, 404, 530, 588, 645, 759, 817, 874, 994, 1058, 1121, 1247, 1310, 1373].forEach(x => {
        out += line(x + 0.5, 955, x + 0.5, 957, '#808080');
    });
    draw('time-axis', out);
}

drawPrice();
drawVolume();
drawTimeAxis();
```
